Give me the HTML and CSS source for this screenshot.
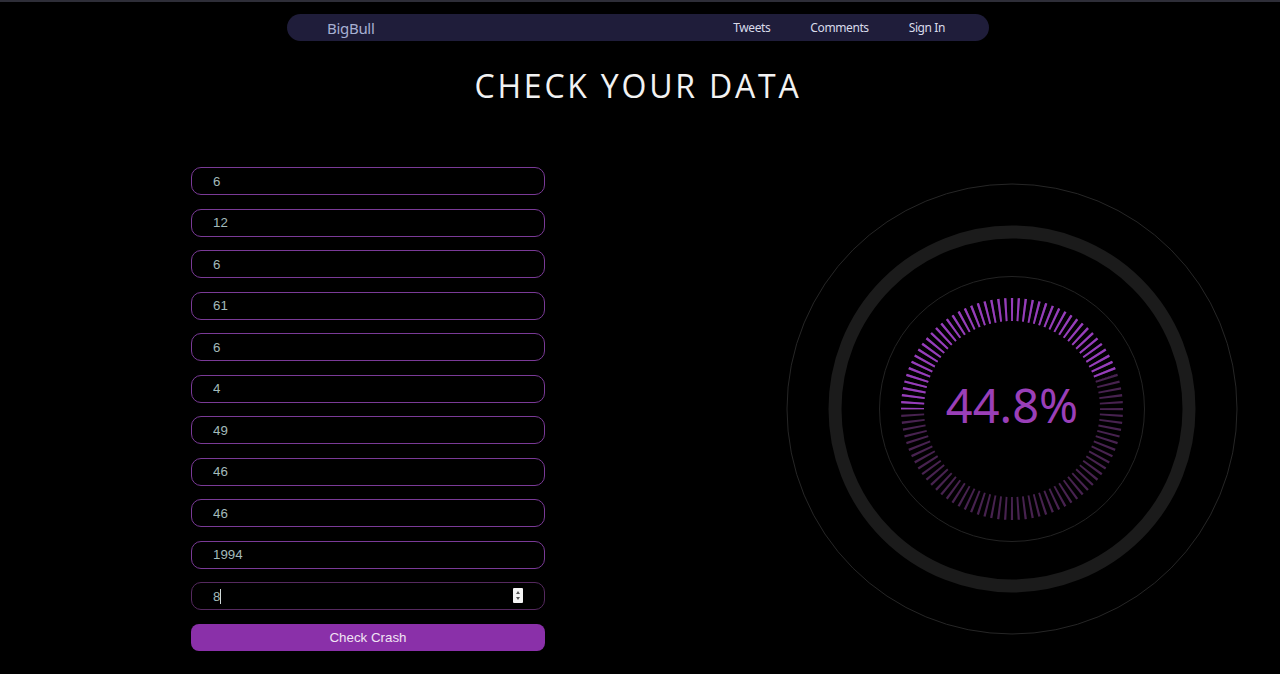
FILE: index.html
```html
<!DOCTYPE html>
<html lang="en">
<head>
<meta charset="utf-8">
<title>BigBull - Check your data</title>
<link rel="stylesheet" href="styles.css">
</head>
<body>
<div class="page">
  <nav class="nav">
    <a class="brand" href="#">BigBull</a>
    <div class="links">
      <a href="#">Tweets</a>
      <a href="#">Comments</a>
      <a href="#">Sign In</a>
    </div>
  </nav>

  <h1 class="title">CHECK YOUR DATA</h1>

  <main class="content">
    <form class="form">
      <input class="field" type="text" value="6">
      <input class="field" type="text" value="12">
      <input class="field" type="text" value="6">
      <input class="field" type="text" value="61">
      <input class="field" type="text" value="6">
      <input class="field" type="text" value="4">
      <input class="field" type="text" value="49">
      <input class="field" type="text" value="46">
      <input class="field" type="text" value="46">
      <input class="field" type="text" value="1994">
      <div class="field-wrap">
        <input class="field field-active" type="text" value="8">
        <span class="caret"></span>
        <span class="spin"><span class="spin-up"></span><span class="spin-down"></span></span>
      </div>
      <button class="btn" type="button">Check Crash</button>
    </form>

    <div class="gauge">
      <svg width="452" height="452" viewBox="0 0 452 452">
        <defs>
          <mask id="done">
            <circle cx="226" cy="226" r="99.5" fill="none" stroke="#fff" stroke-width="26" pathLength="100" stroke-dasharray="44.8 55.2" transform="rotate(-90 226 226)"/>
          </mask>
        </defs>
        <circle cx="226" cy="226" r="225" fill="none" stroke="#262626" stroke-width="1"/>
        <circle cx="226" cy="226" r="177" fill="none" stroke="#1b1b1b" stroke-width="13"/>
        <circle cx="226" cy="226" r="132.5" fill="none" stroke="#232323" stroke-width="1"/>
        <circle cx="226" cy="226" r="99.5" fill="none" stroke="#47224f" stroke-width="23" pathLength="100" stroke-dasharray="0.33 0.67" stroke-dashoffset="0.16" transform="rotate(-90 226 226)"/>
        <circle cx="226" cy="226" r="99.5" fill="none" stroke="#963dbb" stroke-width="23" pathLength="100" stroke-dasharray="0.33 0.67" stroke-dashoffset="0.16" transform="rotate(-90 226 226)" mask="url(#done)"/>
        <text class="pct" x="226" y="240" text-anchor="middle">44.8%</text>
      </svg>
    </div>
  </main>
</div>
</body>
</html>
```

FILE: styles.css
```css
html {
  background: #000;
}

::-webkit-scrollbar {
  width: 4px;
}
::-webkit-scrollbar-track {
  background: #14122a;
}
::-webkit-scrollbar-thumb {
  background: #8a8a8a;
}

body {
  margin: 0;
  background: #000;
  font-family: "Noto Sans", "Open Sans", sans-serif;
}

.page {
  border-top: 2px solid #2e2e38;
  padding-top: 12px;
  padding-right: 4px;
  min-height: 812px;
  box-sizing: border-box;
}

.nav {
  width: 702px;
  height: 27px;
  margin: 0 auto;
  box-sizing: border-box;
  padding: 0 44px 0 40px;
  background: #1f1d3a;
  border-radius: 14px;
  display: flex;
  align-items: center;
  justify-content: space-between;
}

.brand {
  color: #a7afd2;
  font-size: 15px;
  text-decoration: none;
  letter-spacing: -0.3px;
}

.links {
  display: flex;
  gap: 40px;
}

.links a {
  color: #d9dbea;
  font-size: 12px;
  text-decoration: none;
  letter-spacing: -0.4px;
}

.title {
  margin: 25px 0 0;
  text-align: center;
  font-family: "Open Sans", "Noto Sans", sans-serif;
  font-weight: 400;
  font-size: 32px;
  line-height: 40px;
  letter-spacing: 2.8px;
  color: #f2f2f2;
}

.content {
  display: flex;
  align-items: flex-start;
  margin-top: 61px;
}

.form {
  margin-left: 191px;
  width: 354px;
  display: flex;
  flex-direction: column;
  gap: 13.5px;
}

.field {
  display: block;
  width: 100%;
  height: 28px;
  box-sizing: border-box;
  margin: 0;
  padding: 0 10px 0 21px;
  background: #000;
  border: 1px solid #7a3a97;
  border-radius: 10px;
  color: #a3babb;
  font-family: "Liberation Sans", Arial, sans-serif;
  font-size: 13.33px;
  outline: none;
}

.field-wrap {
  position: relative;
}

.field-active {
  border-color: #55295f;
}

.caret {
  position: absolute;
  left: 29px;
  top: 7px;
  width: 1px;
  height: 15px;
  background: #cfd8d8;
}

.spin {
  position: absolute;
  left: 322px;
  top: 6px;
  width: 10px;
  height: 15px;
  background: #f4f4f4;
  border-radius: 1px;
  display: flex;
  flex-direction: column;
  align-items: center;
  justify-content: center;
  gap: 3px;
}

.spin-up {
  width: 0;
  height: 0;
  border-left: 2.5px solid transparent;
  border-right: 2.5px solid transparent;
  border-bottom: 3px solid #555;
}

.spin-down {
  width: 0;
  height: 0;
  border-left: 2.5px solid transparent;
  border-right: 2.5px solid transparent;
  border-top: 3px solid #555;
}

.btn {
  margin-top: 0.5px;
  height: 27px;
  border: none;
  border-radius: 8px;
  background: #8a30a9;
  color: #f1e4f4;
  font-family: "Liberation Sans", Arial, sans-serif;
  font-size: 13.33px;
  cursor: pointer;
}

.gauge {
  margin-left: auto;
  margin-right: 38px;
  margin-top: 16px;
  width: 452px;
  height: 452px;
}

.gauge svg {
  display: block;
}

.pct {
  font-family: "Noto Sans", "Open Sans", sans-serif;
  font-size: 47px;
  fill: #9a3fb8;
}
```
